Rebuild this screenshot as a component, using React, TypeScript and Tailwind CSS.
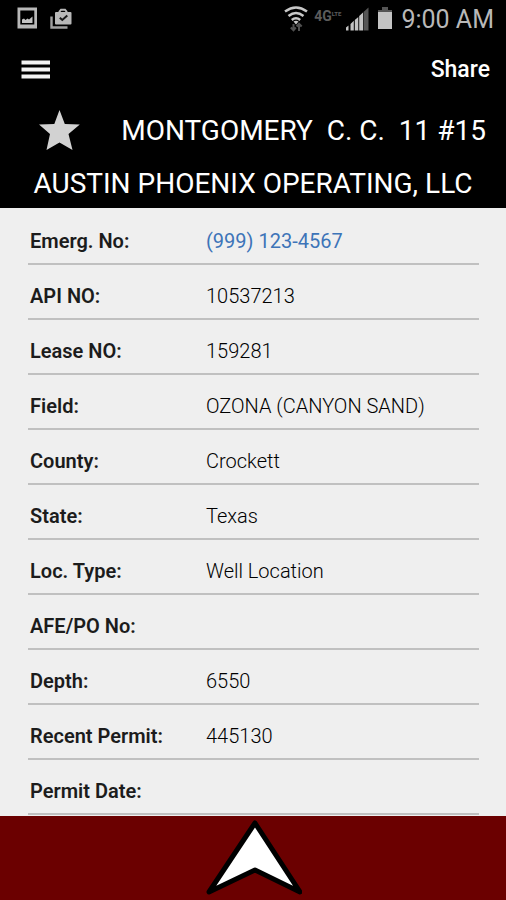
import React from "react";

interface IDetail {
  label: string;
  value?: string;
  href?: string;
}

const details: IDetail[] = [
  { label: "Emerg. No:", value: "(999) 123-4567", href: "tel:9991234567" },
  { label: "API NO:", value: "10537213" },
  { label: "Lease NO:", value: "159281" },
  { label: "Field:", value: "OZONA (CANYON SAND)" },
  { label: "County:", value: "Crockett" },
  { label: "State:", value: "Texas" },
  { label: "Loc. Type:", value: "Well Location" },
  { label: "AFE/PO No:" },
  { label: "Depth:", value: "6550" },
  { label: "Recent Permit:", value: "445130" },
  { label: "Permit Date:" },
];

const StatusBar = () => {
  return (
    <div className="flex items-center justify-between h-10 pl-4 pr-3 text-[#b8b8b8]">
      <div className="flex items-center h-9 gap-3 self-start">
        {/* Screenshot notification */}
        <svg width="22" height="24" viewBox="0 0 22 24">
          <path
            d="M1.5 1.500h19.500v21h-19.500zM4.300 4.500v14h14V4.500z"
            fill="#b8b8b8"
            fillRule="evenodd"
          />
          <path d="M6 17v-3.500l2-1 1.500 1.500 2-1.500 1.500 1 3.500-3v6.500z" fill="#c4c4c4" />
        </svg>
        {/* Play store notification */}
        <svg width="22" height="24" viewBox="0 0 22 24">
          <path d="M1.500 10.500v11h16" fill="none" stroke="#a0a0a0" strokeWidth="2.400" />
          <path d="M9.500 7V5.500l1.500-1.800h4l1.500 1.800V7" fill="none" stroke="#b8b8b8" strokeWidth="2" />
          <rect x="5" y="6" width="16.500" height="12.500" rx="1" fill="#b8b8b8" />
          <path d="M9.800 11.800l2.500 2.200 5-4.500" fill="none" stroke="#181818" strokeWidth="2" />
        </svg>
      </div>

      <div className="flex items-center">
        {/* Wifi */}
        <svg width="24" height="28" viewBox="0 0 24 28">
          <g fill="none" stroke="#c8c8c8" strokeWidth="2.500">
            <path d="M1 5.500Q12-2.500 23 5.500" />
            <path d="M4.500 10Q12 4 19.500 10" />
            <path d="M7.800 14Q12 10.500 16.200 14" />
          </g>
          <path d="M9.500 15.500Q12 14 14.500 15.500L12 18.500z" fill="#c8c8c8" />
          <path
            d="M9.500 18v6M6.800 21.500l2.700 2.800 2.300-2.800M15 25v-7M12.600 20.500L15 17.700l2.700 2.800"
            fill="none"
            stroke="#505050"
            strokeWidth="2"
          />
        </svg>
        <div className="flex items-start h-7 ml-1.5 text-[#5c5c5c] font-bold">
          <span className="text-sm leading-5">4G</span>
          <span className="text-[6px] leading-4">LTE</span>
        </div>
        {/* Signal */}
        <svg className="ml-1" width="24" height="26" viewBox="0 0 24 26">
          <path d="M18.500 5L23.500 .5v23h-5z" fill="#555" />
          <path
            d="M1 20.500l2.500-2v5H1zM5.500 17L8.800 13.700v9.800h-3.300zM9.800 13l3.500-3v13.500H9.800zM14.200 9l3.800-3.500v18h-3.800z"
            fill="#c4c4c4"
          />
        </svg>
        {/* Battery */}
        <svg className="ml-2" width="16" height="26" viewBox="0 0 16 26">
          <path d="M5 0h6v3h4v3H1V3h4z" fill="#555" />
          <path d="M1 5h14v17H1z" fill="#c4c4c4" />
        </svg>
        <span className="ml-2 text-[25px] leading-8">9:00 AM</span>
      </div>
    </div>
  );
};

const DetailRow = ({ item }: { item: IDetail }) => {
  return (
    <div className="flex items-end h-[55px] pb-2.5 pl-0.5 border-b-2 border-[#c0c0c0] text-xl leading-6">
      <dt className="w-44 shrink-0 font-semibold text-[#1c1c1c]">{item.label}</dt>
      <dd className="flex-1 font-light text-black">
        {item.href ? (
          <a href={item.href} className="font-normal text-[#3d74b8]">
            {item.value}
          </a>
        ) : (
          item.value
        )}
      </dd>
    </div>
  );
};

const App = () => {
  return (
    <div className="flex flex-col min-h-screen bg-[#efefef] font-[Roboto,sans-serif]">
      <header className="bg-black text-white">
        <StatusBar />

        {/* Nav */}
        <nav className="flex items-center justify-between h-[60px] pl-5 pr-4">
          <button type="button" aria-label="Menu" className="cursor-pointer">
            <svg width="30" height="20" viewBox="0 0 30 20">
              <path d="M1.500 .5h28.500v4H1.500zM1.500 7.500h28.500v4H1.500zM1.500 14.500h28.500v4H1.500z" fill="#f4f4f4" />
            </svg>
          </button>
          <button type="button" className="text-[23px] leading-8 font-medium cursor-pointer">
            Share
          </button>
        </nav>

        {/* Well name and operator */}
        <div className="flex items-center justify-between h-[62px] pl-[38px] pr-5">
          <button type="button" aria-label="Favorite" className="cursor-pointer">
            <svg width="42" height="42" viewBox="0 0 42 42">
              <path
                d="M21.500 0l5.300 14 15 .5-11.300 9.500 4 16-13-7.500-13 7.500 3.500-16L1 14.500l15.300-.5z"
                fill="#d2d2d2"
              />
            </svg>
          </button>
          <h1 className="text-[28px] leading-8 whitespace-pre">
            MONTGOMERY  C. C.  11 #15
          </h1>
        </div>
        <h2 className="h-[46px] pt-1.5 text-[28px] leading-8 text-center">
          AUSTIN PHOENIX OPERATING, LLC
        </h2>
      </header>

      <main className="flex-1 pl-7 pr-[27px] pt-0.5">
        <dl>
          {details.map((item) => (
            <DetailRow key={item.label} item={item} />
          ))}
        </dl>
      </main>

      <footer className="flex justify-center items-center h-[84px] bg-[#6b0000]">
        <button type="button" aria-label="Navigate to location" className="cursor-pointer">
          <svg width="98" height="80" viewBox="0 0 98 80">
            <path
              d="M51 5L96 74 51 52 5 74z"
              fill="#fff"
              stroke="#000"
              strokeWidth="5"
              strokeLinejoin="round"
            />
          </svg>
        </button>
      </footer>
    </div>
  );
};

export default App;
